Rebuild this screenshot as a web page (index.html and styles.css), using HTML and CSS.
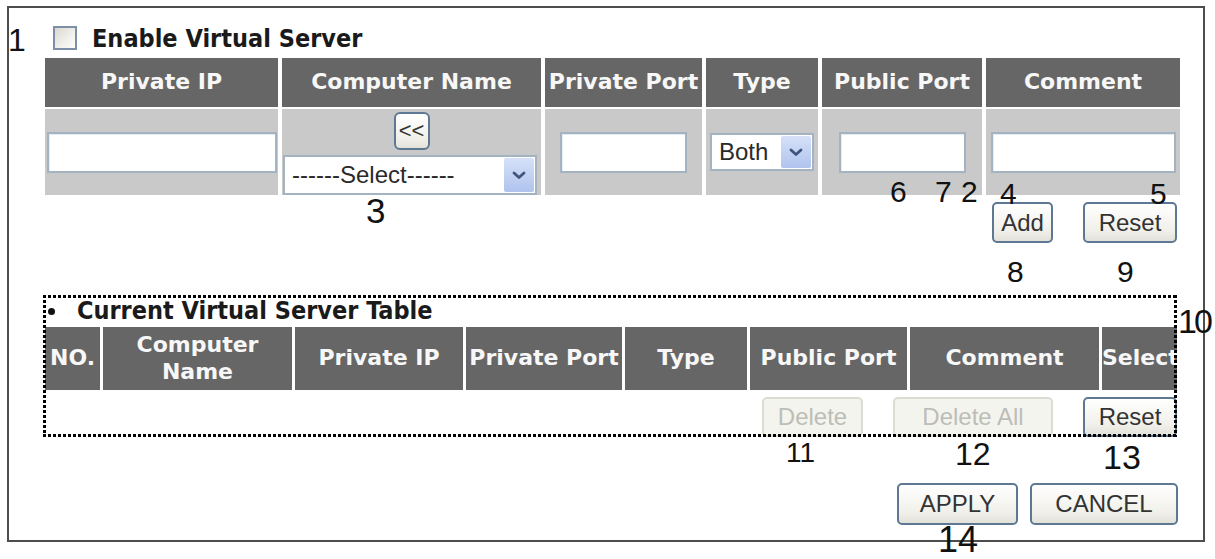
FILE: index.html
```html
<!DOCTYPE html>
<html lang="en">
<head>
<meta charset="utf-8">
<title>Virtual Server</title>
<link rel="stylesheet" href="styles.css">
</head>
<body>
<div class="frame">
  <div class="enable-row">
    <span class="checkbox"></span>
    <span class="enable-label">Enable Virtual Server</span>
  </div>

  <div class="entry-grid">
    <div class="th">Private IP</div>
    <div class="th">Computer Name</div>
    <div class="th">Private Port</div>
    <div class="th">Type</div>
    <div class="th">Public Port</div>
    <div class="th">Comment</div>

    <div class="td"><span class="field field-ip"></span></div>
    <div class="td td-stack">
      <button class="btn btn-copy" type="button">&lt;&lt;</button>
      <div class="dropdown dropdown-pc">
        <span class="dropdown-text">------Select------</span>
        <span class="dropdown-arrow"><svg width="14" height="9" viewBox="0 0 14 9"><path d="M2 2 L7 6.5 L12 2" fill="none" stroke="#3f557c" stroke-width="2.8" stroke-linecap="round" stroke-linejoin="round"/></svg></span>
      </div>
    </div>
    <div class="td"><span class="field field-port"></span></div>
    <div class="td">
      <div class="dropdown dropdown-type">
        <span class="dropdown-text">Both</span>
        <span class="dropdown-arrow"><svg width="14" height="9" viewBox="0 0 14 9"><path d="M2 2 L7 6.5 L12 2" fill="none" stroke="#3f557c" stroke-width="2.8" stroke-linecap="round" stroke-linejoin="round"/></svg></span>
      </div>
    </div>
    <div class="td"><span class="field field-port"></span></div>
    <div class="td"><span class="field field-comment"></span></div>
  </div>

  <div class="actions actions-entry">
    <button class="btn btn-add" type="button">Add</button>
    <button class="btn btn-reset" type="button">Reset</button>
  </div>

  <section class="vs-section">
    <div class="vs-title">
      <span class="bullet"></span>
      <span class="vs-title-text">Current Virtual Server Table</span>
    </div>
    <div class="list-grid">
      <div class="th">NO.</div>
      <div class="th">Computer<br>Name</div>
      <div class="th">Private IP</div>
      <div class="th">Private Port</div>
      <div class="th">Type</div>
      <div class="th">Public Port</div>
      <div class="th">Comment</div>
      <div class="th th-select">Select</div>
    </div>
    <div class="actions actions-list">
      <button class="btn btn-delete" type="button" disabled>Delete</button>
      <button class="btn btn-delete-all" type="button" disabled>Delete All</button>
      <button class="btn btn-reset" type="button">Reset</button>
    </div>
  </section>

  <div class="actions actions-footer">
    <button class="btn btn-apply" type="button">APPLY</button>
    <button class="btn btn-cancel" type="button">CANCEL</button>
  </div>

  <span class="num n1">1</span>
  <span class="num n2">2</span>
  <span class="num n3">3</span>
  <span class="num n4">4</span>
  <span class="num n5">5</span>
  <span class="num n6">6</span>
  <span class="num n7">7</span>
  <span class="num n8">8</span>
  <span class="num n9">9</span>
  <span class="num n10">10</span>
  <span class="num n11">11</span>
  <span class="num n12">12</span>
  <span class="num n13">13</span>
  <span class="num n14">14</span>
</div>
</body>
</html>
```
FILE: styles.css
```css
* {
  box-sizing: border-box;
}

html,
body {
  margin: 0;
  background: #fff;
}

body {
  width: 1215px;
  height: 559px;
  overflow: hidden;
  font-family: "Liberation Sans", Arial, sans-serif;
  color: #222;
}

/* outer panel */
.frame {
  position: relative;
  margin: 6px 0 0 7px;
  width: 1198px;
  height: 536px;
  border: 2px solid #4d4d4d;
  padding: 14px 23px 0 36px;
  display: flex;
  flex-direction: column;
}

/* enable checkbox line */
.enable-row {
  display: flex;
  align-items: center;
  height: 32px;
  padding-left: 8px;
  gap: 15px;
}

.checkbox {
  width: 24px;
  height: 24px;
  border: 2px solid #7d8ea8;
  background: linear-gradient(135deg, #d9d8d0 0%, #f2f1ec 60%, #fdfdfb 100%);
}

.enable-label,
.vs-title-text {
  font-family: "DejaVu Sans Condensed", "DejaVu Sans", sans-serif;
  font-stretch: condensed;
  font-weight: bold;
  font-size: 25px;
  color: #1a1a1a;
}

/* header cells shared by both tables */
.th {
  background: #666;
  color: #f7f7f7;
  font-family: "DejaVu Sans", sans-serif;
  font-weight: bold;
  font-size: 22px;
  line-height: 1.2;
  text-align: center;
  display: flex;
  align-items: center;
  justify-content: center;
  white-space: nowrap;
}

/* entry table */
.entry-grid {
  margin-top: 4px;
  display: grid;
  grid-template-columns: 233px 259px 157px 112px 160px 194px;
  grid-template-rows: 49px 86px;
  column-gap: 4px;
  row-gap: 2px;
}

.td {
  background: #c9c9c9;
  display: flex;
  align-items: center;
  justify-content: center;
}

.td-stack {
  flex-direction: column;
  justify-content: flex-end;
  gap: 5px;
}

.field {
  display: block;
  height: 41px;
  background: #fff;
  border: 2px solid #a4b3c2;
  box-shadow: inset 1px 1px 0 #e6ebf0;
}

.field-ip {
  width: 230px;
}

.field-port {
  width: 127px;
}

.field-comment {
  width: 185px;
}

/* drop-down boxes */
.dropdown {
  display: flex;
  align-items: center;
  background: #fff;
  border: 2px solid #a4b3c2;
  font-size: 24px;
  color: #2a2a2a;
}

.dropdown-pc {
  align-self: flex-start;
  margin-left: 1px;
  width: 254px;
  height: 40px;
  padding: 0 1px 0 7px;
}

.dropdown-type {
  width: 104px;
  height: 38px;
  padding: 0 1px 0 7px;
}

.dropdown-text {
  flex: 1;
  line-height: 1;
}

.dropdown-arrow {
  width: 30px;
  height: calc(100% - 2px);
  display: flex;
  align-items: center;
  justify-content: center;
  background: linear-gradient(#d6e1f8, #afc3ee);
  border-radius: 2px;
}

/* push buttons */
.btn {
  font-family: "Liberation Sans", Arial, sans-serif;
  font-size: 24px;
  color: #333;
  padding: 0;
  border: 2px solid #5e7893;
  border-radius: 5px;
  background: linear-gradient(#ffffff, #f1f0ea 70%, #e3e2da);
  display: flex;
  align-items: center;
  justify-content: center;
}

.btn:disabled {
  border-color: #dddcd3;
  background: #f4f4ee;
  color: #bdbdb8;
}

.btn-copy {
  width: 36px;
  height: 38px;
  font-size: 22px;
  border-radius: 6px;
}

.actions {
  display: flex;
  justify-content: flex-end;
}

.actions-entry {
  margin-top: 7px;
  height: 41px;
  gap: 30px;
  padding-right: 3px;
}

.actions-entry .btn {
  height: 41px;
}

.btn-add {
  width: 61px;
}

.btn-reset {
  width: 94px;
}

/* saved entries block, framed by a dotted line */
.vs-section {
  position: relative;
  margin-top: 52px;
  margin-left: -2px;
  width: 1134px;
  overflow: hidden;
}

.vs-section::after {
  content: "";
  position: absolute;
  inset: 0;
  pointer-events: none;
  background:
    linear-gradient(90deg, #000 60%, transparent 0) 0 0 / 5px 3px repeat-x,
    linear-gradient(90deg, #000 60%, transparent 0) 0 100% / 5px 3px repeat-x,
    linear-gradient(#000 60%, transparent 0) 0 0 / 3px 5px repeat-y,
    linear-gradient(#000 60%, transparent 0) 100% 0 / 3px 5px repeat-y;
}

.vs-title {
  height: 32px;
  display: flex;
  align-items: center;
}

.bullet {
  width: 7px;
  height: 7px;
  margin-left: 5px;
  border-radius: 50%;
  background: #111;
}

.vs-title-text {
  margin-left: 22px;
  line-height: 30px;
}

.list-grid {
  margin-left: 2px;
  display: grid;
  grid-template-columns: 55px 189px 168px 156px 122px 157px 189px 100px;
  grid-template-rows: 63px;
  column-gap: 3px;
}

.th-select {
  justify-content: flex-start;
}

.actions-list {
  margin-top: 7px;
  height: 40px;
  gap: 30px;
}

.actions-list .btn {
  height: 40px;
}

.btn-delete {
  width: 101px;
}

.btn-delete-all {
  width: 160px;
}

.actions-footer {
  margin-top: 46px;
  height: 42px;
  gap: 12px;
  padding-right: 2px;
}

.actions-footer .btn {
  height: 42px;
}

.btn-apply {
  width: 121px;
}

.btn-cancel {
  width: 148px;
}

/* callout numbers */
.num {
  position: absolute;
  font-family: "Liberation Sans", Arial, sans-serif;
  font-size: 30px;
  line-height: 1;
  color: #111;
}

.n1 { left: -1px; top: 16px; font-size: 32px; }
.n2 { left: 952px; top: 169px; }
.n3 { left: 357px; top: 185px; font-size: 35px; }
.n4 { left: 991px; top: 171px; }
.n5 { left: 1141px; top: 171px; }
.n6 { left: 881px; top: 169px; }
.n7 { left: 926px; top: 169px; }
.n8 { left: 998px; top: 249px; }
.n9 { left: 1108px; top: 249px; }
.n10 { left: 1169px; top: 296px; font-size: 34px; letter-spacing: -3px; }
.n11 { left: 777px; top: 431px; font-size: 28px; }
.n12 { left: 946px; top: 430px; font-size: 32px; }
.n13 { left: 1094px; top: 432px; font-size: 34px; }
.n14 { left: 929px; top: 514px; font-size: 36px; }
```
